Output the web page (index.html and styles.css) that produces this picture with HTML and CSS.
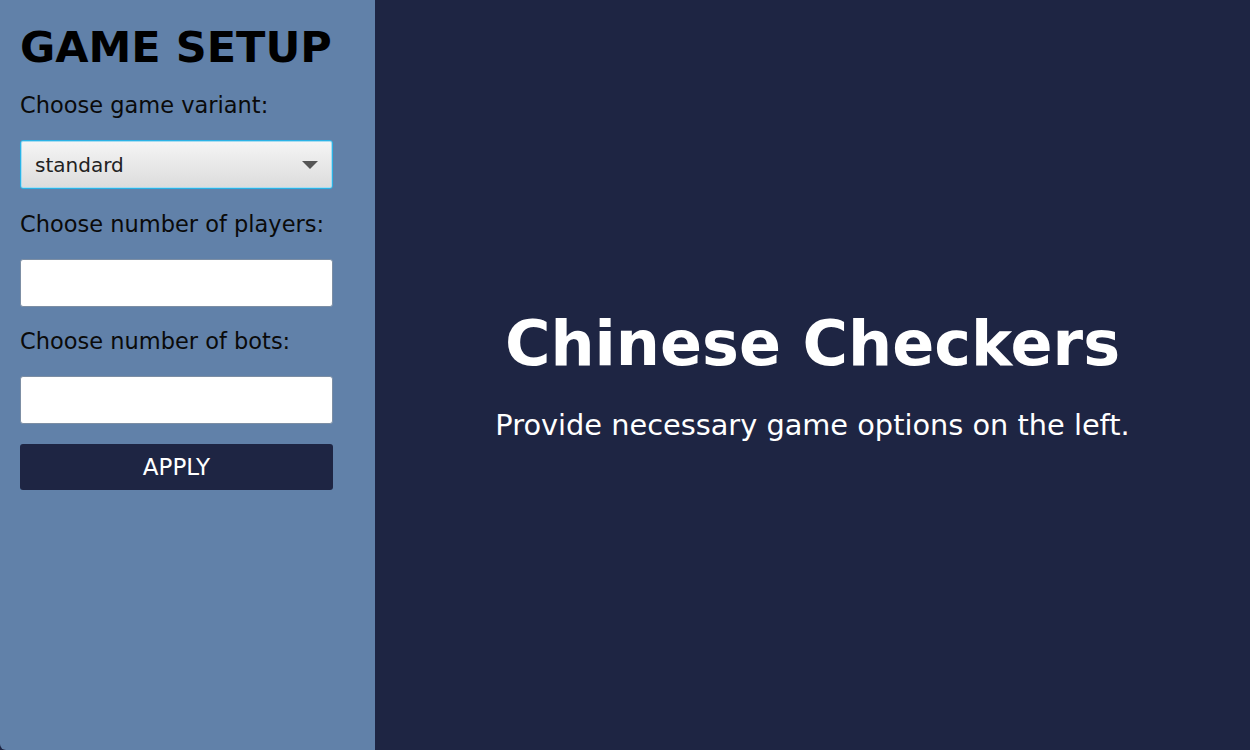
FILE: index.html
```html
<!DOCTYPE html>
<html>
<head>
<meta charset="utf-8">
<link rel="stylesheet" href="styles.css">
</head>
<body>
<div class="app">
  <aside class="sidebar">
    <h1 class="title">GAME SETUP</h1>
    <div class="field field-variant">
      <label class="label">Choose game variant:</label>
      <div class="select">
        <span class="select-text">standard</span>
        <span class="arrow"></span>
      </div>
    </div>
    <div class="field field-players">
      <label class="label">Choose number of players:</label>
      <input class="input" type="text">
    </div>
    <div class="field field-bots">
      <label class="label">Choose number of bots:</label>
      <input class="input" type="text">
    </div>
    <button class="apply">APPLY</button>
  </aside>
  <main class="main">
    <h2 class="main-title">Chinese Checkers</h2>
    <p class="main-sub">Provide necessary game options on the left.</p>
  </main>
</div>
</body>
</html>
```

FILE: styles.css
```css
* { box-sizing: border-box; }
html, body {
  margin: 0;
  padding: 0;
  width: 1250px;
  height: 750px;
  overflow: hidden;
  background: #1e2543;
  font-family: "DejaVu Sans", Verdana, sans-serif;
}
.app {
  display: flex;
  width: 1250px;
  height: 750px;
}
.sidebar {
  width: 375px;
  flex: none;
  background: #6181a9;
  padding: 22px 20px 0 20px;
  display: flex;
  flex-direction: column;
  border-bottom-left-radius: 6px;
}
.title {
  margin: 0;
  font-size: 43px;
  font-weight: bold;
  color: #000;
  line-height: 50px;
}
.field {
  display: flex;
  flex-direction: column;
}
.label {
  font-size: 22.5px;
  color: #0a0a0a;
  line-height: 28px;
  margin-top: 20px;
  margin-bottom: 21px;
}
.field-variant .label { margin-top: 19px; }
.field-players .label { margin-top: 21px; }
.field-bots .label { margin-top: 20px; }
.select {
  width: 313px;
  height: 49px;
  border: 1px solid #2bb3e6;
  border-radius: 3px;
  background: linear-gradient(#f5f5f5, #dcdcdc);
  box-shadow: inset 0 0 0 1px #a8dcf0;
  display: flex;
  align-items: center;
  justify-content: space-between;
  padding: 0 14px 0 14px;
}
.select-text {
  font-size: 20px;
  color: #222;
}
.arrow {
  width: 0;
  height: 0;
  border-left: 8px solid transparent;
  border-right: 8px solid transparent;
  border-top: 8px solid #555;
}
.input {
  width: 313px;
  height: 48px;
  border: 1px solid #7c8ea4;
  border-radius: 3px;
  background: #fff;
  margin: 0;
  padding: 0 10px;
  font-size: 20px;
  outline: none;
}
.apply {
  margin-top: 20px;
  width: 313px;
  height: 46px;
  border: none;
  border-radius: 3px;
  background: #1e2543;
  color: #fff;
  font-family: "DejaVu Sans", Verdana, sans-serif;
  font-size: 23px;
  padding: 0;
}
.main {
  flex: 1;
  display: flex;
  flex-direction: column;
  align-items: center;
  justify-content: center;
  color: #fff;
  padding-bottom: 0;
}
.main-title {
  margin: 0;
  font-size: 62px;
  font-weight: bold;
  line-height: 72px;
}
.main-sub {
  margin: 28px 0 0 0;
  font-size: 28.8px;
  line-height: 34px;
}
```
